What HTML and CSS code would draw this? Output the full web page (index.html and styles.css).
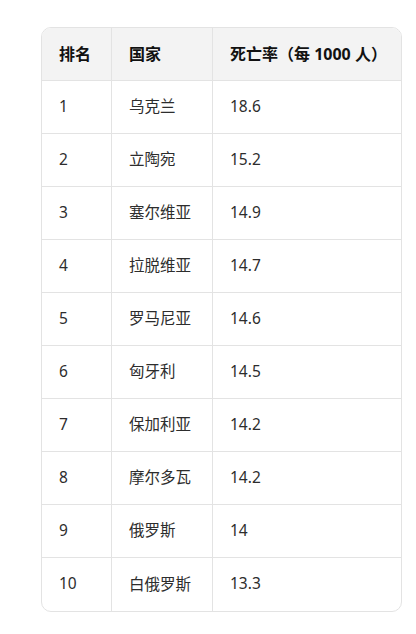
FILE: index.html
```html
<!DOCTYPE html>
<html lang="zh">
<head>
<meta charset="utf-8">
<link rel="stylesheet" href="styles.css">
</head>
<body>
<div class="wrap">
<table class="tbl">
<thead>
<tr><th class="c1">排名</th><th class="c2">国家</th><th class="c3">死亡率（每 1000 人）</th></tr>
</thead>
<tbody>
<tr><td>1</td><td>乌克兰</td><td>18.6</td></tr>
<tr><td>2</td><td>立陶宛</td><td>15.2</td></tr>
<tr><td>3</td><td>塞尔维亚</td><td>14.9</td></tr>
<tr><td>4</td><td>拉脱维亚</td><td>14.7</td></tr>
<tr><td>5</td><td>罗马尼亚</td><td>14.6</td></tr>
<tr><td>6</td><td>匈牙利</td><td>14.5</td></tr>
<tr><td>7</td><td>保加利亚</td><td>14.2</td></tr>
<tr><td>8</td><td>摩尔多瓦</td><td>14.2</td></tr>
<tr><td>9</td><td>俄罗斯</td><td>14</td></tr>
<tr><td>10</td><td>白俄罗斯</td><td>13.3</td></tr>
</tbody>
</table>
</div>
</body>
</html>
```

FILE: styles.css
```css
html, body {
  margin: 0;
  padding: 0;
  background: #ffffff;
}
body {
  font-family: "Noto Sans", "Noto Sans CJK SC", sans-serif;
  color: #2d2d2d;
}
.wrap {
  padding: 27px 0 0 41px;
}
.tbl {
  width: 361px;
  border-collapse: separate;
  border-spacing: 0;
  border: 1px solid #e3e3e3;
  border-radius: 10px;
  overflow: hidden;
  table-layout: fixed;
}
th, td {
  box-sizing: border-box;
  text-align: left;
  padding: 0 0 0 17px;
  border-right: 1px solid #e3e3e3;
  border-bottom: 1px solid #e3e3e3;
  white-space: nowrap;
}
.c1 { width: 70px; }
.c2 { width: 101px; }
.c3 { width: auto; }
th:last-child, td:last-child { border-right: none; }
tbody tr:last-child td { border-bottom: none; }
th {
  height: 53px;
  background: #f3f3f3;
  font-weight: 700;
  font-size: 16px;
  color: #111;
  padding-bottom: 2px;
}
td {
  height: 53px;
  font-size: 15.5px;
  font-weight: 400;
  padding-bottom: 3px;
}
```
